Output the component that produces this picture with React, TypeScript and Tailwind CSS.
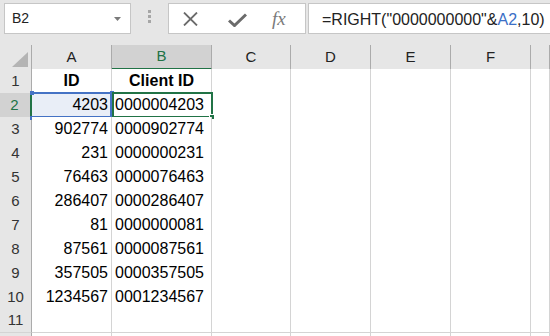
import React from 'react';

// Excel 風のシート: 先頭ゼロ埋め ID の例
const rows: { n: number; id: string; client: string }[] = [
  { n: 1, id: 'ID', client: 'Client ID' },
  { n: 2, id: '4203', client: '0000004203' },
  { n: 3, id: '902774', client: '0000902774' },
  { n: 4, id: '231', client: '0000000231' },
  { n: 5, id: '76463', client: '0000076463' },
  { n: 6, id: '286407', client: '0000286407' },
  { n: 7, id: '81', client: '0000000081' },
  { n: 8, id: '87561', client: '0000087561' },
  { n: 9, id: '357505', client: '0000357505' },
  { n: 10, id: '1234567', client: '0001234567' },
  { n: 11, id: '', client: '' },
  { n: 12, id: '', client: '' },
];

const cols = ['A', 'B', 'C', 'D', 'E', 'F', ''];
const gridCols = 'grid grid-cols-[32px_80px_100px_79px_80px_80px_80px_1fr]';
const font = { fontFamily: '"Liberation Sans", Arial, sans-serif' };

function FormulaBar() {
  return (
    <div className="h-[45px] bg-[#e6e6e6] flex items-start pt-[3px] pl-[4px] gap-0">
      {/* 名前ボックス */}
      <div className="w-[127px] h-[31px] shrink-0 bg-white border border-[#c6c6c6] flex items-center justify-between pl-[7px] pr-[9px]">
        <span className="text-[14px] text-[#222]">B2</span>
        <svg width="7" height="4" viewBox="0 0 7 4">
          <path d="M0 0h7L3.5 4z" fill="#7a7a7a" />
        </svg>
      </div>
      {/* 区切り */}
      <div className="w-[37px] h-[31px] shrink-0 flex flex-col items-center justify-center gap-[2px] pb-[4px]">
        <div className="w-[3px] h-[3px] bg-[#a6a6a6]" />
        <div className="w-[3px] h-[3px] bg-[#a6a6a6]" />
        <div className="w-[3px] h-[3px] bg-[#a6a6a6]" />
      </div>
      {/* キャンセル・確定・関数 */}
      <div className="w-[138px] h-[31px] shrink-0 bg-white border border-[#c6c6c6] flex items-center pl-[14px]">
        <svg width="15" height="14" viewBox="0 0 15 14">
          <path d="M1 0.5L14 13.5M14 0.5L1 13.5" stroke="#6b6b6b" strokeWidth="1.8" />
        </svg>
        <svg className="ml-[30px] mt-[2px]" width="19" height="14" viewBox="0 0 19 14">
          <path d="M1 7.5L6.5 12.5L18 1.5" stroke="#6b6b6b" strokeWidth="3" fill="none" />
        </svg>
        <span
          className="ml-[25px] text-[19px] italic text-[#7a7a7a] leading-none"
          style={{ fontFamily: '"Liberation Serif", "Times New Roman", serif' }}
        >
          fx
        </span>
      </div>
      {/* 数式 */}
      <div className="ml-[2px] flex-1 h-[31px] -mr-[4px] bg-white border border-[#c6c6c6] flex items-center pl-[13px] pt-[2px]">
        <span className="text-[16px] text-[#222] whitespace-nowrap">
          =RIGHT("0000000000"&amp;<span className="text-[#3b6fc6]">A2</span>,10)
        </span>
      </div>
    </div>
  );
}

function HeaderRow() {
  return (
    <div className={`${gridCols} h-[24px]`}>
      <div className="bg-[#e6e6e6] border-r border-b border-[#ababab] flex items-end justify-end pr-[3px] pb-[2px]">
        <svg width="16" height="15" viewBox="0 0 16 15">
          <path d="M16 0V15H0z" fill="#b4b4b4" />
        </svg>
      </div>
      {cols.map((c, i) =>
        c === 'B' ? (
          <div
            key={i}
            className="bg-[#d2d2d2] border-r border-[#ababab] border-b-2 border-b-[#217346] flex items-center justify-center text-[15px] text-[#217346]"
          >
            {c}
          </div>
        ) : (
          <div
            key={i}
            className="bg-[#e6e6e6] border-r border-b border-[#ababab] flex items-center justify-center text-[15px] text-[#222]"
          >
            {c}
          </div>
        )
      )}
    </div>
  );
}

function SheetRow({ n, id, client }: { n: number; id: string; client: string }) {
  const header = n === 1;
  const selected = n === 2;
  return (
    <div className={`${gridCols} h-[24px] text-[16px] text-black`}>
      {selected ? (
        <div className="bg-[#d2d2d2] border-b border-[#d4d4d4] border-r-2 border-r-[#217346] flex items-center justify-center pr-[1px] text-[15px] text-[#217346]">
          {n}
        </div>
      ) : (
        <div className="bg-[#e6e6e6] border-b border-[#d4d4d4] border-r border-r-[#ababab] flex items-center justify-center text-[15px] text-[#333]">
          {n < 12 ? n : ''}
        </div>
      )}
      <div
        className={`relative border-r border-b border-[#d4d4d4] flex items-center px-[3px] ${
          header ? 'justify-center font-bold' : 'justify-end'
        } ${selected ? 'bg-[#e9eef7]' : 'bg-white'}`}
      >
        {id}
        {selected && (
          <>
            {/* 参照セルの青枠 */}
            <div className="absolute left-0 right-[-1px] top-[-1px] bottom-[-1px] border-y-2 border-r-2 border-[#4472c4]" />
            <div className="absolute left-[-2px] top-[-2px] w-[4px] h-[4px] bg-[#4472c4]" />
            <div className="absolute left-[-2px] bottom-[-3px] w-[4px] h-[4px] bg-[#4472c4]" />
            <div className="absolute right-[-3px] top-[-2px] w-[4px] h-[4px] bg-[#4472c4]" />
            <div className="absolute right-[-3px] bottom-[-3px] w-[4px] h-[4px] bg-[#4472c4]" />
          </>
        )}
      </div>
      <div
        className={`relative bg-white border-r border-b border-[#d4d4d4] flex items-center px-[3px] ${
          header ? 'justify-center font-bold' : 'justify-start'
        }`}
      >
        {client}
        {selected && (
          <>
            {/* アクティブセルの枠とフィルハンドル */}
            <div className="absolute left-[0px] right-[-2px] top-[-1px] bottom-[-1px] border-2 border-[#217346]" />
            <div className="absolute right-[-4px] bottom-[-3px] w-[6px] h-[6px] bg-[#217346] border border-white" />
          </>
        )}
      </div>
      {[0, 1, 2, 3, 4].map((k) => (
        <div key={k} className="bg-white border-r border-b border-[#d4d4d4]" />
      ))}
    </div>
  );
}

export default function App() {
  return (
    <div className="w-[550px] h-[336px] overflow-hidden bg-white" style={font}>
      <FormulaBar />
      <HeaderRow />
      {rows.map((r) => (
        <SheetRow key={r.n} {...r} />
      ))}
    </div>
  );
}
